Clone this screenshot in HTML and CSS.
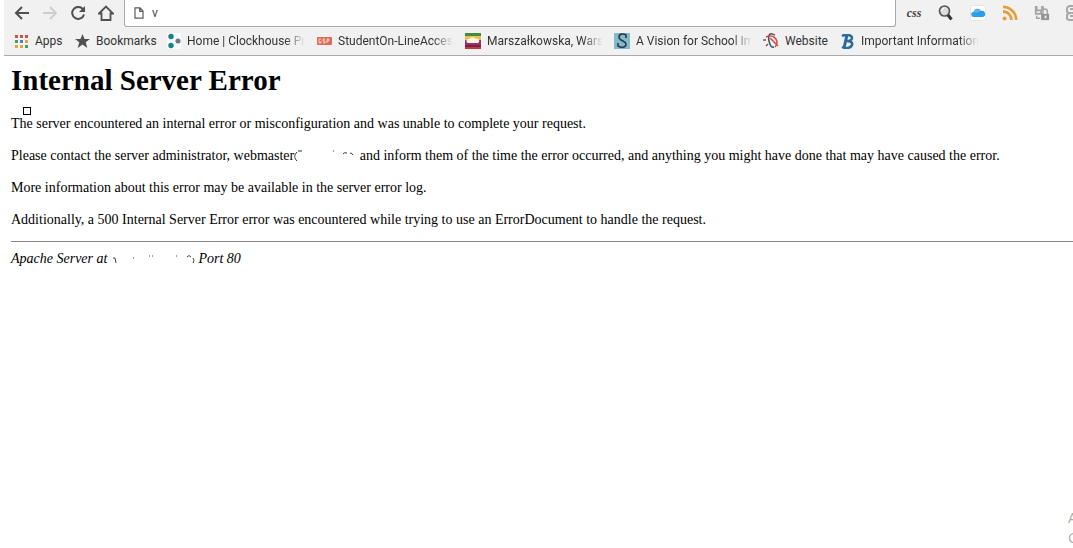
FILE: index.html
```html
<!DOCTYPE html>
<html lang="en">
<head>
<meta charset="utf-8">
<title>500 Internal Server Error</title>
<link rel="stylesheet" href="styles.css">
</head>
<body>
<header class="chrome">
  <div class="toolbar">
    <nav class="nav" aria-label="Navigation">
      <button class="tool" type="button" aria-label="Back"><svg width="16" height="16" viewBox="0 0 16 16" fill="none" stroke="#505050" stroke-width="2"><path d="M15 8H2M8 2L2 8l6 6"/></svg></button>
      <button class="tool" type="button" aria-label="Forward" disabled><svg width="16" height="16" viewBox="0 0 16 16" fill="none" stroke="#cfcfcf" stroke-width="2"><path d="M1 8h13M8 2l6 6-6 6"/></svg></button>
      <button class="tool" type="button" aria-label="Reload"><svg width="16" height="16" viewBox="0 0 16 16" fill="none" stroke="#505050" stroke-width="2"><path d="M13 4.300A6 6 0 1 0 14 9.500"/><path d="M15 1v6H9z" fill="#505050" stroke="none"/></svg></button>
      <button class="tool" type="button" aria-label="Home"><svg width="16" height="16" viewBox="0 0 16 16" fill="none" stroke="#505050" stroke-width="1.800"><path d="M1 8.500L8 1.500l7 7h-2.500V15h-9V8.500z"/></svg></button>
    </nav>
    <label class="address">
      <svg width="10" height="12" viewBox="0 0 10 12" fill="none" stroke="#5b5b5b" stroke-width="1.200"><path d="M1 .8h5l3 3.200v7.200H1zM5.700.8v3.500H9"/></svg>
      <input class="url" type="text" value="v" aria-label="Address">
    </label>
    <div class="extensions">
      <button class="tool css" type="button">css</button>
      <button class="tool" type="button" aria-label="Search"><svg width="16" height="16" viewBox="0 0 16 16"><circle cx="6.500" cy="6" r="5" fill="#dcdcdc" stroke="#555" stroke-width="1.700"/><path d="M10 10l3.500 4.500" stroke="#333" stroke-width="3"/><path d="M3.500 6A2.500 2.500 0 0 1 6 3.500" fill="none" stroke="#fff"/></svg></button>
      <button class="tool" type="button" aria-label="Cloud"><svg width="16" height="16" viewBox="0 0 16 16"><rect x=".5" y=".5" width="15" height="15" rx="2" fill="#fff" stroke="#e4e4e4"/><path d="M4 12a2.500 2.500 0 0 1-.5-5A4 4 0 0 1 11 6a3 3 0 0 1 2 6z" fill="#2c9de6"/><path d="M4 7a3.500 3.500 0 0 1 6.500-.8C8 6.500 7 8 4 7z" fill="#5bbcf2"/></svg></button>
      <button class="tool" type="button" aria-label="Feed"><svg width="16" height="16" viewBox="0 0 16 16" fill="none" stroke="#e5a044" stroke-width="2.800"><circle cx="2.500" cy="13.500" r="2" fill="#e5a044" stroke="none"/><path d="M1 6.500A8.500 8.500 0 0 1 9.500 15M1 1.800A13.200 13.200 0 0 1 14.200 15"/></svg></button>
      <button class="tool" type="button" aria-label="Page lock"><svg width="18" height="16" viewBox="0 0 18 16"><path d="M1 0h10v5H9v5H1z" fill="#a3a3a3"/><path d="M4 0v4h4V0M3 6h4v2H3z" fill="#ededed"/><rect x="8" y="9" width="9" height="7" fill="#949494"/><path d="M10 9V6a2.500 2.500 0 0 1 5 0v3M3 11v3h4" fill="none" stroke="#a3a3a3" stroke-width="1.600"/><path d="M12 11h2v3h-2z" fill="#eee"/></svg></button>
      <button class="tool" type="button" aria-label="More tools"><svg width="16" height="16" viewBox="0 0 16 16" fill="none" stroke="#a9a9a9" stroke-width="2"><path d="M10 1H3L1 3v4l2 1h7M3 8l-2 2v4l2 1h7M4 4h6M4 11h6"/></svg></button>
    </div>
  </div>
  <nav class="bookmarks" aria-label="Bookmarks">
    <a class="mark apps" href="#"><svg width="14" height="14" viewBox="0 0 14 14"><path d="M0 1h3v3H0zM5 1h3v3H5zM10 1h3v3h-3z" fill="#c65349"/><path d="M0 6h3v3H0zM10 11h3v3h-3z" fill="#469c61"/><path d="M5 6h3v3H5z" fill="#4f81c2"/><path d="M10 6h3v3h-3zM5 11h3v3H5zM0 11h3v3H0z" fill="#dda63c"/></svg><span>Apps</span></a>
    <a class="mark starred" href="#"><svg width="15" height="14" viewBox="0 0 15 14"><path d="M7.500 0l2 5H15l-4.300 3.300L12.300 14 7.500 10.500 2.700 14l1.600-5.700L0 5h5.500z" fill="#505050"/></svg><span>Bookmarks</span></a>
    <a class="mark wide" href="#"><svg width="14" height="16" viewBox="0 0 14 16"><path d="M0 0h14v16H0z" fill="#fafafa"/><circle cx="4" cy="3.500" r="2.700" fill="#16838c"/><circle cx="4" cy="12.500" r="2.700" fill="#16838c"/><circle cx="11" cy="8" r="2.500" fill="#6f7880"/></svg><span class="fade">Home | Clockhouse Pr</span></a>
    <a class="mark wide" href="#"><svg width="16" height="16" viewBox="0 0 16 16"><rect x="1" y="4" width="15" height="8" rx="1" fill="#df6959"/><path d="M5 6H3v4h2V8M9 6H7v2h2v2H7M11 10V6h2v2h-2" fill="none" stroke="#f7d6ce"/></svg><span class="fade">StudentOn-LineAcces</span></a>
    <a class="mark wide" href="#"><svg width="16" height="16" viewBox="0 0 16 16"><path d="M0 0h16v3H0z" fill="#438b43"/><path d="M0 3h16v4H0z" fill="#e9c052"/><path d="M0 7h16v5H0z" fill="#8f326e"/><path d="M0 12h16v2H0z" fill="#78204d"/><path d="M0 14h16v2H0z" fill="#c83a31"/><path d="M3 10a2 2 0 0 1 1-4 4 3.500 0 0 1 7 0 2 2 0 0 1 2 4z" fill="#fff6e0"/></svg><span class="fade">Marszałkowska, Warsz</span></a>
    <a class="mark wide" href="#"><svg width="16" height="16" viewBox="0 0 16 16"><path d="M0 0h16v16H0z" fill="#86b9ca"/><path d="M12 5V2c-3-2-7-1-7 2 0 4 7 4 7 7 0 4-5 4-8 2v-3" fill="none" stroke="#203d4b" stroke-width="1.600"/></svg><span class="fade">A Vision for School Im</span></a>
    <a class="mark site" href="#"><svg width="16" height="16" viewBox="0 0 16 16" fill="none"><path d="M9 1C6 0 5 4 6 8s2 7 5 6" stroke="#38506b" stroke-width="1.500"/><path d="M3 4c4-2 8-1 10 2 2 4 1 6-1 8M7 5l8 8" stroke="#d94936" stroke-width="1.500"/><path d="M0 7h3M5 11l-2 2M9 1l3 1" stroke="#7b5560" stroke-width="1.500"/></svg><span>Website</span></a>
    <a class="mark info" href="#"><svg width="14" height="15" viewBox="0 0 14 15" fill="none" stroke="#2b6b9c"><path d="M6 1L3 14" stroke-width="3"/><path d="M1 2c4-2 10-1 10 2 0 2-3 3-5 3 3 0 6 1 5 4s-6 4-10 2" stroke-width="2.500"/></svg><span class="fade">Important Information</span></a>
  </nav>
</header>
<main class="page">
  <h1 class="title">Internal Server Error</h1>
  <span class="marker"></span>
  <p>The server encountered an internal error or misconfiguration and was unable to complete your request.</p>
  <p>Please contact the server administrator, webmaster<svg class="erased" width="62" height="12" viewBox="0 0 62 12" fill="none" stroke="#333"><path d="M3 2C0 5 0 8 3 11M4 1h4M39 1h1M49 4q1-2 4-1M56 3q2 0 3 2"/></svg> and inform them of the time the error occurred, and anything you might have done that may have caused the error.</p>
  <p>More information about this error may be available in the server error log.</p>
  <p>Additionally, a 500 Internal Server Error error was encountered while trying to use an ErrorDocument to handle the request.</p>
  <hr>
  <address>Apache Server at <svg class="erased" width="84" height="12" viewBox="0 0 84 12" fill="none" stroke="#444"><path d="M2 5h2l1 5M22 5h1M38 3h1M41 3h1M65 3h1M76 4q2-3 4 0M82 5q2 2 0 5"/></svg> Port 80</address>
</main>
<aside class="watermark">Activate Windows<br>Go to Settings</aside>
</body>
</html>
```
FILE: styles.css
```css
* { box-sizing: border-box; }
body {
  margin: 0;
  min-height: 100vh;
  position: relative;
  overflow: hidden;
  background: #fff;
  color: #000;
  font-family: "Liberation Serif", serif;
  font-size: 14px;
}
.chrome {
  margin-left: 4px;
  background: #f1f1f1;
  border-bottom: 1px solid #a9a9a9;
  font-family: Roboto, sans-serif;
  font-size: 12px;
}
.toolbar {
  display: flex;
  align-items: flex-start;
  height: 27px;
  overflow: hidden;
}
.nav { display: flex; gap: 12px; padding: 0 10px; }
.tool {
  display: flex;
  align-items: center;
  justify-content: center;
  flex: none;
  width: 16px;
  height: 26px;
  padding: 0;
  border: 0;
  background: none;
}
.address {
  display: flex;
  align-items: center;
  flex: 1;
  gap: 8px;
  height: 27px;
  padding-left: 9px;
  background: #fff;
  border: 1px solid #a9a9a9;
  border-top: 0;
  border-radius: 0 0 3px 3px;
}
.url {
  flex: 1;
  min-width: 0;
  padding: 0;
  border: 0;
  outline: 0;
  background: none;
  color: #444;
  font: inherit;
}
.extensions {
  display: flex;
  gap: 16px;
  width: 177px;
  padding-left: 10px;
}
.css {
  color: #444;
  font: italic bold 12px "Liberation Serif", serif;
}
.bookmarks {
  display: flex;
  align-items: center;
  height: 28px;
  padding-left: 11px;
  overflow: hidden;
}
.mark {
  display: flex;
  align-items: center;
  flex: none;
  gap: 6px;
  color: #333;
  text-decoration: none;
  white-space: nowrap;
}
.mark svg { flex: none; }
.apps { width: 60px; }
.starred { width: 92px; }
.wide { width: 149px; padding-right: 11px; }
.site { width: 78px; }
.info { width: 140px; }
.fade {
  overflow: hidden;
  -webkit-mask-image: linear-gradient(to left, transparent, #000 20px);
  mask-image: linear-gradient(to left, transparent, #000 20px);
}
.page { position: relative; padding: 7px 0 0 11px; }
.title { margin: 0 0 19px; font-size: 29px; line-height: 34px; }
.marker {
  position: absolute;
  top: 51px;
  left: 23px;
  width: 8px;
  height: 8px;
  border: 1px solid #000;
}
p { margin: 0 0 16px; line-height: 16px; white-space: nowrap; }
p:last-of-type { margin-bottom: 13px; }
hr { margin: 0 0 8px; border: 0; border-top: 1px solid #888; }
address { line-height: 18px; }
.erased { vertical-align: -2px; }
.watermark {
  position: absolute;
  right: 0;
  bottom: 0;
  width: 5px;
  overflow: hidden;
  color: #aaa;
  font: 14px/20px "Open Sans", sans-serif;
  white-space: nowrap;
}
```
